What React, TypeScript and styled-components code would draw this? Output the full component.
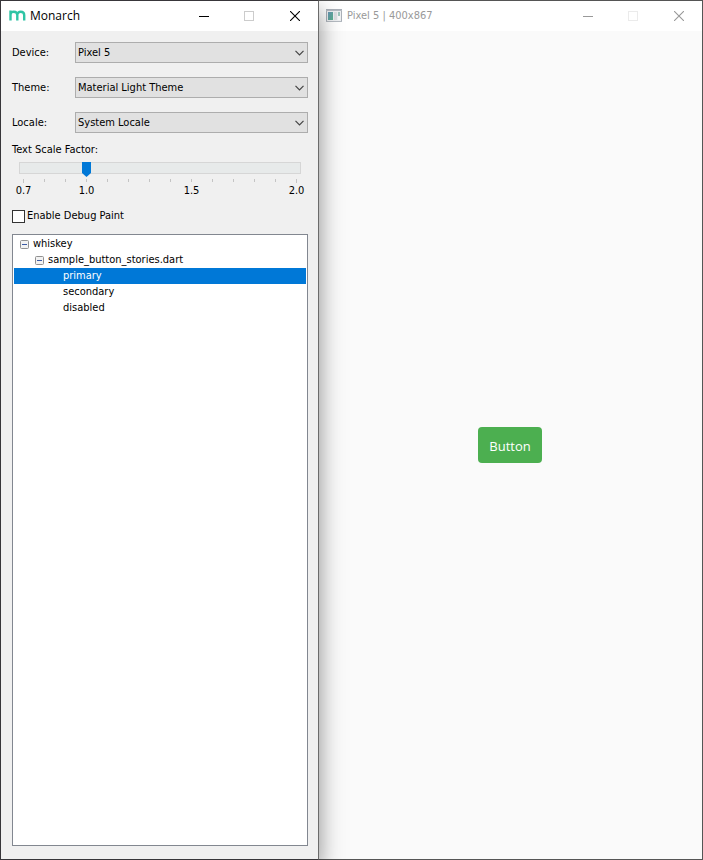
import React, { useState } from "react";
import styled, { createGlobalStyle } from "styled-components";

const GlobalStyle = createGlobalStyle`
  * { box-sizing: border-box; }
  body {
    margin: 0;
    font-family: "DejaVu Sans Condensed", "Noto Sans", sans-serif;
    font-size: 11px;
    line-height: 16px;
    color: #000;
  }
  button, input, select { font: inherit; color: inherit; margin: 0; }
`;

const Desktop = styled.div`
  display: flex;
  min-height: 100vh;
`;

const ControlWindow = styled.section`
  position: relative;
  z-index: 1;
  display: flex;
  flex-direction: column;
  flex: 0 0 319px;
  background: #f0f0f0;
  border: 1px solid #38363a;
  border-right-color: #6b6b6b;
  box-shadow: 0 10px 22px rgba(0, 0, 0, 0.45);
`;

const PreviewWindow = styled.section`
  display: flex;
  flex-direction: column;
  flex: 1;
  min-width: 0;
  background: #fafafa;
  border: 1px solid #555;
  border-left: 0;
`;

const TitleBar = styled.header<{ $inactive?: boolean }>`
  display: flex;
  align-items: center;
  gap: ${(p) => (p.$inactive ? 5 : 4)}px;
  height: 30px;
  padding-left: ${(p) => (p.$inactive ? 7 : 8)}px;
  background: #fff;
  color: ${(p) => (p.$inactive ? "#999" : "#000")};
`;

const Title = styled.h1<{ $compact?: boolean }>`
  flex: 1;
  margin: 0;
  font-family: ${(p) => (p.$compact ? "inherit" : '"Open Sans", "Noto Sans", sans-serif')};
  font-size: ${(p) => (p.$compact ? 11 : 12)}px;
  line-height: 16px;
  font-weight: 400;
  white-space: nowrap;
`;

const CaptionButtons = styled.div`
  display: flex;
`;

const CaptionButton = styled.button`
  display: grid;
  place-items: center;
  width: 46px;
  height: 28px;
  padding: 0;
  border: 0;
  background: transparent;
  &:disabled { color: #ccc; width: 45px; }
`;

const Controls = styled.main`
  display: flex;
  flex-direction: column;
  flex: 1;
  padding: 11px 10px 13px 11px;
`;

const Fields = styled.div`
  display: grid;
  gap: 14px;
`;

const Field = styled.div`
  display: grid;
  grid-template-columns: 63px 1fr;
  align-items: center;
  height: 21px;
`;

const SelectWrap = styled.div`
  display: grid;
  align-items: center;
  > * { grid-area: 1 / 1; }
  svg { justify-self: end; margin-right: 4px; pointer-events: none; }
`;

const Select = styled.select`
  appearance: none;
  width: 100%;
  height: 21px;
  padding: 0 20px 0 2px;
  border: 1px solid #adadad;
  border-radius: 0;
  background: #e1e1e1;
`;

const ScaleLabel = styled.label`
  margin-top: 9px;
`;

const Slider = styled.input`
  appearance: none;
  height: 15px;
  margin: 4px 7px 0;
  background: transparent;
  &::-webkit-slider-runnable-track {
    height: 12px;
    margin-bottom: 3px;
    background: #e7eaea;
    box-shadow: inset 0 0 0 1px #d6d6d6;
  }
  &::-webkit-slider-thumb {
    appearance: none;
    width: 9px;
    height: 15px;
    background: #0078d7;
    clip-path: polygon(0 0, 100% 0, 100% 11px, 50% 100%, 0 11px);
  }
`;

const Scale = styled.div`
  display: grid;
  grid-template-columns: repeat(14, 1fr);
  padding: 0 1px;
  margin-top: 2px;
`;

const Mark = styled.div<{ $end: boolean }>`
  display: flex;
  flex-direction: column;
  align-items: center;
  height: 20px;
  white-space: nowrap;
  &::before {
    content: "";
    flex: none;
    width: 1px;
    height: ${(p) => (p.$end ? 4 : 3)}px;
    margin-bottom: ${(p) => (p.$end ? 0 : 1)}px;
    background: #c4c4c4;
  }
`;

const CheckRow = styled.label`
  display: flex;
  align-items: center;
  gap: 2px;
  height: 16px;
  margin-top: 9px;
`;

const CheckBox = styled.input`
  appearance: none;
  width: 13px;
  height: 13px;
  border: 1px solid #333;
  background: #fff;
  &:checked { box-shadow: inset 0 0 0 2px #fff; background: #333; }
`;

const Tree = styled.div`
  flex: 1;
  margin-top: 10px;
  padding: 1px;
  border: 1px solid #828790;
  background: #fff;
`;

const TreeRow = styled.div<{ $level: number; $selected?: boolean }>`
  display: flex;
  align-items: center;
  gap: 4px;
  height: 16px;
  padding-left: ${(p) => [6, 21, 49][p.$level]}px;
  background: ${(p) => (p.$selected ? "#0078d7" : "transparent")};
  color: ${(p) => (p.$selected ? "#fff" : "#000")};
`;

const Toggle = styled.button`
  display: grid;
  width: 9px;
  height: 9px;
  padding: 0;
  border: 0;
  background: none;
`;

const Stage = styled.main`
  display: grid;
  flex: 1;
  place-items: center;
  padding-right: 1px;
`;

const SampleButton = styled.button`
  min-width: 64px;
  height: 36px;
  padding: 2px 8px 0;
  border: 0;
  border-radius: 4px;
  background: #4caf50;
  color: #fff;
  font-family: "Open Sans", "Noto Sans", sans-serif;
  font-size: 13px;
`;

const MonarchIcon = () => (
  <svg width="17" height="12" viewBox="0 0 17 12" fill="none" stroke="#2fc4a5" strokeWidth="2.4" aria-hidden="true">
    <path d="M1.5 10.5V0.5M1.5 5C1.5 2.6 3 1.7 4.8 1.7C7 1.7 8.3 2.8 8.3 5V10.5M8.3 5C8.3 2.8 9.8 1.7 11.7 1.7C13.9 1.7 15.2 2.8 15.2 5V10.5" />
  </svg>
);

const AppIcon = () => (
  <svg width="16" height="14" viewBox="0 0 16 14" aria-hidden="true">
    <defs>
      <linearGradient id="pane" x1="0" y1="0" x2="1" y2="1">
        <stop offset="0" stopColor="#6795b5" />
        <stop offset="1" stopColor="#5ab38d" />
      </linearGradient>
    </defs>
    <rect x="0.5" y="0.5" width="15" height="12" fill="#eef0f2" stroke="#aab0b8" />
    <path d="M0 1.5H16M0 12.5H16" stroke="#b5bbc2" />
    <rect x="2" y="3" width="5" height="8" fill="url(#pane)" />
    <rect x="8" y="3" width="3" height="8" fill="#dcdfe1" />
    <rect x="12" y="3" width="2" height="4" fill="#9fc6bd" />
    <rect x="12" y="7" width="2" height="4" fill="#f8f8f8" />
  </svg>
);

const Chevron = () => (
  <svg width="9" height="6" viewBox="0 0 9 6" fill="none" stroke="#444" strokeWidth="1.2" aria-hidden="true">
    <path d="M0.5 0.8L4.5 4.8L8.5 0.8" />
  </svg>
);

const Minus = () => (
  <svg width="9" height="9" viewBox="0 0 9 9" aria-hidden="true">
    <rect x="0.5" y="0.5" width="8" height="8" rx="1" fill="#f2f2f2" stroke="#919191" />
    <path d="M2 4.5H7" stroke="#3b5aa5" />
  </svg>
);

const WindowButtons = ({ inactive = false }: { inactive?: boolean }) => (
  <CaptionButtons>
    <CaptionButton aria-label="Minimize">
      <svg width="10" height="10" viewBox="0 0 10 10" stroke="currentColor">
        <path d="M0 5.5H10" />
      </svg>
    </CaptionButton>
    <CaptionButton aria-label="Maximize" disabled>
      <svg width="11" height="10" viewBox="0 0 11 10" fill="none" stroke={inactive ? "#ebebeb" : "#ccc"}>
        <rect x="0.5" y="0.5" width="9" height="9" />
      </svg>
    </CaptionButton>
    <CaptionButton aria-label="Close">
      <svg width="10" height="10" viewBox="0 0 10 10" stroke="currentColor" strokeWidth="1.1">
        <path d="M0 0L10 10M10 0L0 10" />
      </svg>
    </CaptionButton>
  </CaptionButtons>
);

const fields = [
  { id: "device", label: "Device:", value: "Pixel 5" },
  { id: "theme", label: "Theme:", value: "Material Light Theme" },
  { id: "locale", label: "Locale:", value: "System Locale" },
];

const marks = ["0.7", "", "", "1.0", "", "", "", "", "1.5", "", "", "", "", "2.0"];
const stories = ["primary", "secondary", "disabled"];

export default function App() {
  const [story, setStory] = useState("primary");
  return (
    <>
      <GlobalStyle />
      <Desktop>
        <ControlWindow>
          <TitleBar>
            <MonarchIcon />
            <Title>Monarch</Title>
            <WindowButtons />
          </TitleBar>
          <Controls>
            <Fields>
              {fields.map((f) => (
                <Field key={f.id}>
                  <label htmlFor={f.id}>{f.label}</label>
                  <SelectWrap>
                    <Select id={f.id}>
                      <option>{f.value}</option>
                    </Select>
                    <Chevron />
                  </SelectWrap>
                </Field>
              ))}
            </Fields>
            <ScaleLabel htmlFor="scale">Text Scale Factor:</ScaleLabel>
            <Slider id="scale" type="range" min="0.7" max="2" step="0.1" defaultValue="1" />
            <Scale>
              {marks.map((m, i) => (
                <Mark key={i} $end={i === 0 || i === marks.length - 1}>{m}</Mark>
              ))}
            </Scale>
            <CheckRow>
              <CheckBox type="checkbox" />
              Enable Debug Paint
            </CheckRow>
            <Tree role="tree" aria-label="Stories">
              <TreeRow role="treeitem" $level={0}>
                <Toggle aria-label="Collapse whiskey"><Minus /></Toggle>
                whiskey
              </TreeRow>
              <TreeRow role="treeitem" $level={1}>
                <Toggle aria-label="Collapse sample_button_stories.dart"><Minus /></Toggle>
                sample_button_stories.dart
              </TreeRow>
              {stories.map((s) => (
                <TreeRow key={s} role="treeitem" $level={2} $selected={s === story} onClick={() => setStory(s)}>
                  {s}
                </TreeRow>
              ))}
            </Tree>
          </Controls>
        </ControlWindow>
        <PreviewWindow>
          <TitleBar $inactive>
            <AppIcon />
            <Title $compact>Pixel 5 | 400x867</Title>
            <WindowButtons inactive />
          </TitleBar>
          <Stage>
            <SampleButton>Button</SampleButton>
          </Stage>
        </PreviewWindow>
      </Desktop>
    </>
  );
}
